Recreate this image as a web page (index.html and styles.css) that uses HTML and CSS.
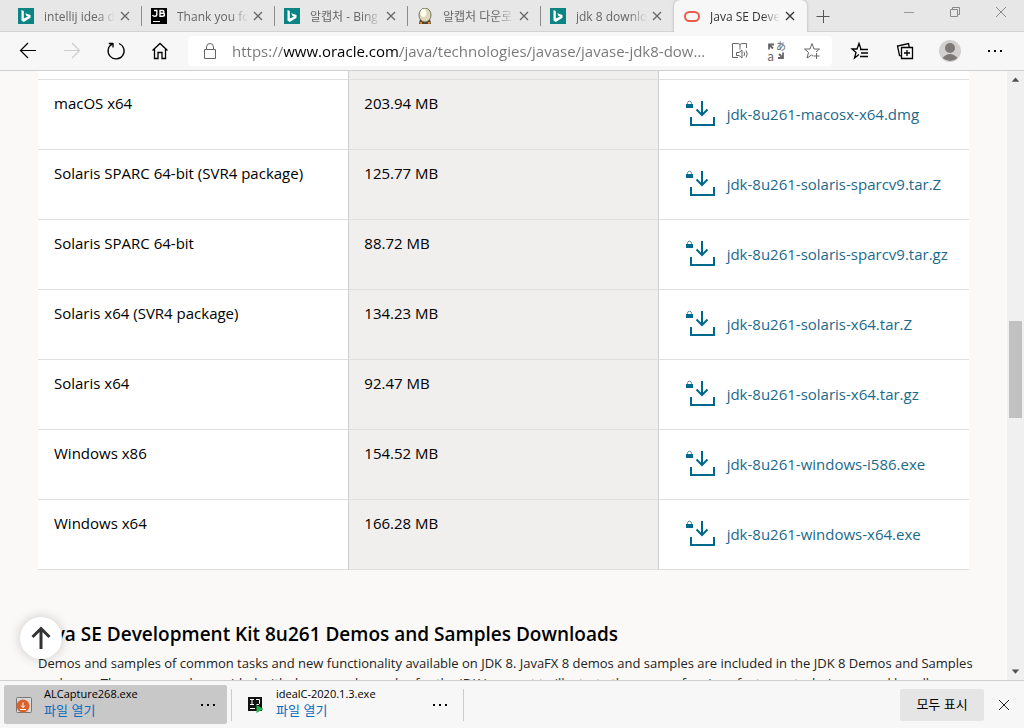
FILE: index.html
```html
<!DOCTYPE html>
<html lang="ko">
<head>
    <meta charset="UTF-8">
    <meta name="viewport" content="width=device-width, initial-scale=1.0">
    <title>Java SE Development Kit 8 Downloads</title>
    <link rel="stylesheet" href="styles.css">
</head>
<body>

    <!-- shared icons -->
    <svg class="defs" width="0" height="0">
        <symbol id="bing" viewBox="0 0 16 16">
            <rect width="16" height="16" fill="#0c8484"/>
            <path d="M3.500 2l2.300.9v7.600l4.200-1.900-1.700-.9-1-2.500 5.200 1.800v2.800L5.800 14l-2.300-1.400z" fill="#fff"/>
        </symbol>
        <symbol id="cross" viewBox="0 0 16 16">
            <path d="M4 4l8 8M12 4l-8 8" fill="none" stroke="currentColor" stroke-width="1.3"/>
        </symbol>
        <symbol id="dots" viewBox="0 0 16 16">
            <path d="M1 7h2v2H1zM7 7h2v2H7zM13 7h2v2h-2z" fill="currentColor"/>
        </symbol>
        <symbol id="download" viewBox="0 0 30 28">
            <path d="M1.500 5V3.200a2 2 0 0 1 4 0V5" fill="none" stroke="#5b93ab"/>
            <path d="M0 4h7v4H0z" fill="#00688c"/>
            <path d="M16 1v14M10.500 9.500L16 15l5.500-5.500M5 17v8h23V17" fill="none" stroke="#00688c" stroke-width="2"/>
        </symbol>
    </svg>

    <header class="browser">
        <div class="tabs">
            <div class="tab">
                <svg class="icon"><use href="#bing"/></svg>
                <span class="title">intellij idea download</span>
                <button class="close" aria-label="Close tab"><svg class="icon"><use href="#cross"/></svg></button>
            </div>
            <div class="tab">
                <svg class="icon" viewBox="0 0 16 16">
                    <rect width="16" height="16"/>
                    <path d="M1.500 7q.7 1.300 2.200 1.300Q5.800 8.300 5.800 6.500V2.500H3M9 2.500v5.800h2.500q2 0 2-1.500T11.500 5.300H9h2.300q1.700 0 1.700-1.400T11.300 2.500z" fill="none" stroke="#fff" stroke-width="1.400"/>
                    <path d="M2 13h7v1H2z" fill="#fff"/>
                </svg>
                <span class="title">Thank you for downloading</span>
                <button class="close" aria-label="Close tab"><svg class="icon"><use href="#cross"/></svg></button>
            </div>
            <div class="tab">
                <svg class="icon"><use href="#bing"/></svg>
                <span class="title">알캡처 - Bing 검색</span>
                <button class="close" aria-label="Close tab"><svg class="icon"><use href="#cross"/></svg></button>
            </div>
            <div class="tab">
                <svg class="icon" viewBox="0 0 16 16">
                    <path d="M2 16l1-5h10l1 5z" fill="#53402b"/>
                    <path d="M3 14h2v2H3zM11 14h2v2h-2z" fill="#e08a28"/>
                    <ellipse cx="8" cy="7" rx="6" ry="7" fill="#dcd8b8" stroke="#77745d"/>
                    <ellipse cx="6.500" cy="5" rx="3" ry="4" fill="#fffff2"/>
                </svg>
                <span class="title">알캡처 다운로드</span>
                <button class="close" aria-label="Close tab"><svg class="icon"><use href="#cross"/></svg></button>
            </div>
            <div class="tab">
                <svg class="icon"><use href="#bing"/></svg>
                <span class="title">jdk 8 download - Bing</span>
                <button class="close" aria-label="Close tab"><svg class="icon"><use href="#cross"/></svg></button>
            </div>
            <div class="tab active">
                <svg class="icon" viewBox="0 0 16 16"><rect x="1" y="4" width="14" height="9" rx="4.500" fill="none" stroke="#ea5b4c" stroke-width="2"/></svg>
                <span class="title">Java SE Development Kit</span>
                <button class="close" aria-label="Close tab"><svg class="icon"><use href="#cross"/></svg></button>
            </div>
            <button class="new-tab" aria-label="New tab"><svg class="icon" viewBox="0 0 16 16"><path d="M1.500 8.500h13M8.500 2v13" stroke="#555" fill="none"/></svg></button>
            <div class="window-buttons">
                <button aria-label="Minimize"><svg class="icon" viewBox="0 0 16 16"><path d="M3 8.500h10" stroke="#999"/></svg></button>
                <button aria-label="Restore"><svg class="icon" viewBox="0 0 16 16"><path d="M3.500 5.500h7v7h-7zM5.500 5.500v-2h7v7h-2" stroke="#888" fill="none"/></svg></button>
                <button aria-label="Close"><svg class="icon" viewBox="0 0 16 16"><path d="M3 3l10 10M13 3L3 13" stroke="#888"/></svg></button>
            </div>
        </div>

        <div class="toolbar">
            <div class="nav">
                <button aria-label="Back"><svg viewBox="0 0 20 20"><path d="M18 9.500H3M10 2L2.500 9.500 10 17" stroke-width="1.200"/></svg></button>
                <button aria-label="Forward" disabled><svg viewBox="0 0 20 20"><path d="M2 9.500h15M10 2l7.500 7.500L10 17" stroke-width="1.200"/></svg></button>
                <button aria-label="Refresh"><svg viewBox="0 0 20 20"><path d="M7 2.500H2.800M7 2v4.500M13 2.500a8 8 0 1 1-6.500.3" stroke-width="1.300"/></svg></button>
                <button aria-label="Home"><svg viewBox="0 0 20 20"><path d="M2.500 9.500L10 2.500l7.500 7M4.500 8v9.500h3.500v-6h4v6h3.500V8" stroke-width="1.300"/></svg></button>
            </div>
            <div class="address">
                <svg class="lock" viewBox="0 0 20 20"><path d="M4.500 8.500h11v9h-11zM6.500 8.500V6a3.500 3.500 0 0 1 7 0v2.500"/></svg>
                <input type="text" aria-label="Address" value="https://www.oracle.com/java/technologies/javase/javase-jdk8-downloads.html">
                <button aria-label="Read aloud"><svg viewBox="0 0 20 20"><path d="M8 16.500H2.500v-14H7q2 0 3 1 1-1 3-1h3.500V7M10 3.500v5M6.500 11.500H9L12 9v8l-3-2.500H6.500zM14 11q1.200 2 0 4M16 9.500q2.500 3.500 0 7"/></svg></button>
                <button class="translate" aria-label="Translate"><span>あ</span><span>a</span><svg viewBox="0 0 20 20"><path d="M3 8.500V3.500h5M3 3.500l4 4M17 11.500V17h-5M17 17l-4-4" stroke-width="1.800"/></svg></button>
                <button aria-label="Add to favorites"><svg viewBox="0 0 20 20"><path d="M11 15l-1.500-1L5 17l1.500-5.500L2.500 8H8l2-5.500L12 8h5.500L14 11M14.500 12v6M11.500 15h6"/></svg></button>
            </div>
            <div class="nav tools">
                <button aria-label="Favorites"><svg viewBox="0 0 20 20"><path d="M9 13.500L4.500 17l1.500-5.500L2 8h5l2-5.500L11 8M10 8.500h8M11 12h7M10 15.500h8" stroke-width="1.300"/></svg></button>
                <button aria-label="Collections"><svg viewBox="0 0 20 20"><path d="M6.500 6.500h11v11h-11zM12 9v6M9 12h6M6 15l-1.500-.5L2.500 5l11-2.500.8 4" stroke-width="1.300"/></svg></button>
                <button aria-label="Profile"><svg class="avatar" viewBox="0 0 22 22"><circle cx="11" cy="11" r="11" fill="#d2d0ce"/><circle cx="11" cy="8" r="5" fill="#7c7876"/><path d="M3.500 18q7.500-8 15 0-7 6-15 0z" fill="#7c7876"/></svg></button>
                <button aria-label="Settings and more"><svg class="icon fill"><use href="#dots"/></svg></button>
            </div>
        </div>
    </header>

    <div class="viewport">
        <main class="page">
            <table class="downloads">
                <tbody>
                    <tr class="cut"><td></td><td></td><td></td></tr>
                    <tr><td>macOS x64</td><td>203.94 MB</td><td><a href="#"><svg><use href="#download"/></svg>jdk-8u261-macosx-x64.dmg</a></td></tr>
                    <tr><td>Solaris SPARC 64-bit (SVR4 package)</td><td>125.77 MB</td><td><a href="#"><svg><use href="#download"/></svg>jdk-8u261-solaris-sparcv9.tar.Z</a></td></tr>
                    <tr><td>Solaris SPARC 64-bit</td><td>88.72 MB</td><td><a href="#"><svg><use href="#download"/></svg>jdk-8u261-solaris-sparcv9.tar.gz</a></td></tr>
                    <tr><td>Solaris x64 (SVR4 package)</td><td>134.23 MB</td><td><a href="#"><svg><use href="#download"/></svg>jdk-8u261-solaris-x64.tar.Z</a></td></tr>
                    <tr><td>Solaris x64</td><td>92.47 MB</td><td><a href="#"><svg><use href="#download"/></svg>jdk-8u261-solaris-x64.tar.gz</a></td></tr>
                    <tr><td>Windows x86</td><td>154.52 MB</td><td><a href="#"><svg><use href="#download"/></svg>jdk-8u261-windows-i586.exe</a></td></tr>
                    <tr><td>Windows x64</td><td>166.28 MB</td><td><a href="#"><svg><use href="#download"/></svg>jdk-8u261-windows-x64.exe</a></td></tr>
                </tbody>
            </table>
            <h2>Java SE Development Kit 8u261 Demos and Samples Downloads</h2>
            <p>Demos and samples of common tasks and new functionality available on JDK 8. JavaFX 8 demos and samples are included in the JDK 8 Demos and Samples packages. The source code provided with demos and samples for the JDK is meant to illustrate the usage of various features, techniques, and bundles.</p>
        </main>
        <div class="scrollbar">
            <svg viewBox="0 0 16 16"><path d="M4.500 10L8 6l3.500 4z"/></svg>
            <div class="thumb"></div>
            <svg class="down" viewBox="0 0 16 16"><path d="M4.500 6L8 10l3.500-4z"/></svg>
        </div>
        <button class="to-top" aria-label="Back to top"><svg viewBox="0 0 24 24"><path d="M12 23V2M3.500 11L12 2.500l8.500 8.500"/></svg></button>
    </div>

    <footer class="shelf">
        <div class="file">
            <svg class="icon" viewBox="0 0 16 16"><rect x=".5" y=".5" width="15" height="15" rx="1" fill="#d8d8d8" stroke="#777"/><circle cx="7" cy="9" r="6.500" fill="#d9622b"/><path d="M7 5.500v5M5 8.500l2 2 2-2M4 12.500h6" stroke="#fff" fill="none"/></svg>
            <div class="name"><span>ALCapture268.exe</span><a href="#">파일 열기</a></div>
            <button aria-label="More options"><svg class="icon"><use href="#dots"/></svg></button>
        </div>
        <div class="file">
            <svg class="icon" viewBox="0 0 16 16"><rect width="14" height="14" fill="#111"/><path d="M2 2.500h4M4 2.500v5M2 7.500h4M8 2.500h3.500v4q0 1.500-3 1M2 11.500h5" stroke="#fff" fill="none"/><path d="M8.500 8l7 4-7 4z" fill="#27b34b"/></svg>
            <div class="name"><span>idealC-2020.1.3.exe</span><a href="#">파일 열기</a></div>
            <button aria-label="More options"><svg class="icon"><use href="#dots"/></svg></button>
        </div>
        <button class="show-all">모두 표시</button>
        <button class="dismiss" aria-label="Close"><svg class="icon" viewBox="0 0 16 16"><path d="M3 3l10 10M13 3L3 13" stroke="#222"/></svg></button>
    </footer>

</body>
</html>
```
FILE: styles.css
```css
* {
    box-sizing: border-box;
}

body {
    display: flex;
    flex-direction: column;
    height: 100vh;
    margin: 0;
    overflow: hidden;
    font-family: "Open Sans", "Noto Sans CJK KR", sans-serif;
    font-size: 12px;
    color: #000;
}

button {
    display: flex;
    align-items: center;
    justify-content: center;
    padding: 0;
    border: none;
    background: none;
    font: inherit;
    color: inherit;
}

a {
    text-decoration: none;
}

.defs {
    position: absolute;
}

.icon {
    flex: none;
    width: 16px;
    height: 16px;
}

/* tab strip */
.tabs {
    display: flex;
    height: 32px;
    padding-left: 9px;
    background: #e7e7e7;
    box-shadow: inset 0 -1px #d3d3d3;
}

.tab {
    display: flex;
    align-items: center;
    flex: 0 1 133px;
    min-width: 0;
    gap: 10px;
    padding: 0 9px;
    color: #666;
    background: linear-gradient(#8c8c8c, #8c8c8c) right center / 1px 20px no-repeat;
}

.tab:nth-child(5) {
    background: none;
}

.tab.active {
    padding-left: 10px;
    border-radius: 6px 6px 0 0;
    background: #f7f7f7;
    box-shadow: 0 0 3px #aaa;
    clip-path: inset(0 -3px 0 -3px);
    color: #333;
}

.title {
    flex: 1;
    min-width: 0;
    overflow: hidden;
    white-space: nowrap;
    -webkit-mask-image: linear-gradient(to right, #000 75%, transparent);
    mask-image: linear-gradient(to right, #000 75%, transparent);
}

.close {
    margin-left: -8px;
}

.new-tab {
    width: 32px;
}

.window-buttons {
    display: flex;
    height: 24px;
    margin-left: auto;
}

.window-buttons button {
    width: 46px;
}

/* toolbar */
.toolbar {
    display: flex;
    align-items: center;
    gap: 12px;
    height: 39px;
    padding: 0 13px 0 12px;
    background: #f7f7f7;
    border-bottom: 1px solid #cfcfcf;
}

.toolbar svg {
    width: 20px;
    height: 20px;
    fill: none;
    stroke: currentColor;
}

.toolbar .fill {
    width: 16px;
    height: 16px;
    stroke: none;
}

.toolbar .avatar {
    width: 22px;
    height: 22px;
    stroke: none;
}

.nav {
    display: flex;
    gap: 12px;
}

.nav button {
    width: 32px;
    height: 32px;
}

.nav button:disabled {
    color: #ccc;
}

.tools {
    gap: 13px;
}

.address {
    display: flex;
    align-items: center;
    flex: 1;
    min-width: 0;
    height: 30px;
    padding: 0 8px 0 12px;
    border-radius: 4px;
    background: #fff;
    color: #666;
}

.lock {
    flex: none;
}

.address input {
    flex: 1;
    min-width: 0;
    height: 30px;
    margin: 0 8px 0 12px;
    padding: 0;
    border: none;
    outline: none;
    font: inherit;
    font-size: 15px;
    text-overflow: ellipsis;
    /* the domain is darker than the rest of the address */
    color: transparent;
    background: linear-gradient(to right, #767676 52px, #000 52px, #000 168px, #767676 168px);
    -webkit-background-clip: text;
    background-clip: text;
}

.address button {
    width: 36px;
    height: 30px;
}

.address button:last-child {
    width: 24px;
    margin-left: 6px;
}

.address .translate {
    position: relative;
}

.translate span {
    position: absolute;
    top: 4px;
    right: 8px;
    font-family: "Noto Sans CJK JP", sans-serif;
    font-size: 10px;
    line-height: 12px;
}

.translate span + span {
    top: 14px;
    right: 20px;
    font-size: 12px;
}

/* page */
.viewport {
    position: relative;
    display: flex;
    flex: 1;
    min-height: 0;
}

.page {
    flex: 1;
    overflow: hidden;
    padding: 0 38px;
    background: #faf9f7;
}

.downloads {
    width: 100%;
    table-layout: fixed;
    border-spacing: 0;
    background: #fff;
    font-size: 15px;
    line-height: 24px;
}

.downloads td {
    height: 70px;
    padding: 11px 16px;
    border-bottom: 1px solid #dfdfdf;
    vertical-align: top;
}

.downloads td:nth-child(2) {
    padding-left: 15px;
    border-left: 1px solid #cfcecc;
    border-right: 1px solid #cfcecc;
    background: #f0efed;
}

.downloads td:nth-child(3) {
    padding: 0 0 2px 27px;
    vertical-align: middle;
}

.downloads .cut td {
    height: 9px;
    padding: 0;
}

.downloads a {
    display: flex;
    align-items: center;
    gap: 11px;
    color: #1b6a8c;
}

.downloads svg {
    flex: none;
    width: 30px;
    height: 28px;
}

h2 {
    margin: 50px 0 0;
    font-size: 19px;
    font-weight: 600;
    line-height: 28px;
}

p {
    margin: 5px -8px 0 0;
    font-size: 13px;
    line-height: 20px;
    color: #222;
}

.scrollbar {
    display: grid;
    grid-template-rows: 17px 233fr 97px 246fr 17px;
    width: 17px;
    background: #f0f0f0;
}

.scrollbar svg {
    width: 17px;
    height: 17px;
    fill: #505050;
}

.scrollbar .down {
    grid-row: 5;
}

.thumb {
    grid-row: 3;
    margin: 0 2px;
    background: #c1c1c1;
}

.to-top {
    position: absolute;
    left: 20px;
    bottom: 21px;
    width: 42px;
    height: 42px;
    border-radius: 50%;
    background: #fff;
    box-shadow: 0 0 12px rgba(0, 0, 0, 0.2);
}

.to-top svg {
    width: 24px;
    height: 24px;
    fill: none;
    stroke: #333;
    stroke-width: 3;
}

/* download shelf */
.shelf {
    display: flex;
    align-items: center;
    height: 48px;
    padding: 0 12px 0 4px;
    border-top: 1px solid #cfcfcf;
    background: #f7f7f7;
}

.file {
    display: flex;
    align-items: center;
    gap: 12px;
    width: 223px;
    height: 39px;
    padding: 0 11px 0 12px;
    margin-right: 4px;
    border-radius: 2px;
    background: #c8c8c8;
}

/* separators on both sides */
.file + .file {
    width: 233px;
    padding: 0 16px 0 17px;
    background:
        linear-gradient(#ccc, #ccc) left center / 1px 32px no-repeat,
        linear-gradient(#ccc, #ccc) right center / 1px 32px no-repeat;
}

.name {
    display: flex;
    flex: 1;
    flex-direction: column;
    padding-bottom: 5px;
    font-size: 11px;
    line-height: 16px;
}

.name a {
    font-family: "Noto Sans CJK KR", sans-serif;
    font-size: 13px;
    color: #0a6cbd;
}

.show-all {
    width: 84px;
    height: 32px;
    padding-bottom: 2px;
    margin-left: auto;
    border-radius: 2px;
    background: #e5e5e5;
    font-size: 13px;
}

.dismiss {
    margin-left: 12px;
}
```
